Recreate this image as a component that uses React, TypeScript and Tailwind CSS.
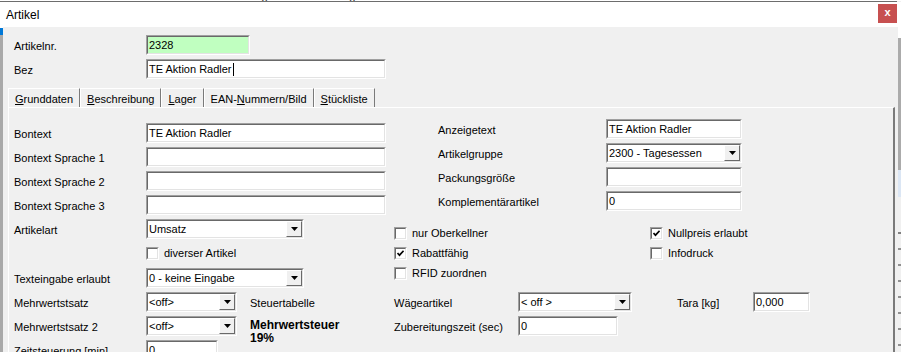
import type { ReactNode } from "react";

const sunkenOuter = "border border-t-[#a0a0a0] border-l-[#a0a0a0] border-b-white border-r-white";
const sunkenInner = "border border-t-[#696969] border-l-[#696969] border-b-[#e3e3e3] border-r-[#e3e3e3]";

function Field({ value = "", className = "", bg = "bg-white", caret = false }: { value?: string; className?: string; bg?: string; caret?: boolean }) {
  return (
    <div className={`h-[20px] shrink-0 ${sunkenOuter} ${className}`}>
      <div className={`h-full flex items-center pl-px ${sunkenInner} ${bg}`}>
        <span className="whitespace-nowrap leading-none">{value}</span>
        {caret && <span className="ml-px w-px h-[13px] bg-black" />}
      </div>
    </div>
  );
}

function DropButton() {
  return (
    <div className="h-full w-[16px] shrink-0 border border-t-white border-l-white border-b-[#696969] border-r-[#696969] bg-[#f0f0f0] flex items-center justify-center">
      <svg width="7" height="4" viewBox="0 0 7 4">
        <path d="M0 0h7L3.5 4z" fill="#000" />
      </svg>
    </div>
  );
}

function Select({ value, className = "" }: { value: string; className?: string }) {
  return (
    <div className={`h-[20px] shrink-0 ${sunkenOuter} ${className}`}>
      <div className={`h-full flex items-center ${sunkenInner} bg-white`}>
        <span className="flex-1 pl-px whitespace-nowrap leading-none">{value}</span>
        <DropButton />
      </div>
    </div>
  );
}

function Check({ checked = false, label }: { checked?: boolean; label: string }) {
  return (
    <div className="flex items-center">
      <div className={`w-[13px] h-[13px] shrink-0 ${sunkenOuter}`}>
        <div className={`w-full h-full ${sunkenInner} bg-white flex items-center justify-center`}>
          {checked && (
            <svg width="7" height="7" viewBox="0 0 7 7">
              <path d="M0.5 3 L2.5 5.2 L6.6 0.8" stroke="#000" strokeWidth="1.7" fill="none" />
            </svg>
          )}
        </div>
      </div>
      <span className="ml-[5px] whitespace-nowrap">{label}</span>
    </div>
  );
}

function Tab({ children }: { children: ReactNode }) {
  return (
    <div className="h-[19px] flex items-center pt-[3px] px-[6px] border-t border-l border-r border-t-white border-l-white border-r-[#7a7a7a] whitespace-nowrap">
      {children}
    </div>
  );
}

function Row({ label, children, h = "h-[24px]" }: { label: string; children?: ReactNode; h?: string }) {
  return (
    <div className={`flex items-center ${h}`}>
      <span className="w-[132px] shrink-0 pt-[2px] whitespace-nowrap">{label}</span>
      {children}
    </div>
  );
}

function RightRow({ label, children }: { label: string; children?: ReactNode }) {
  return (
    <div className="flex items-center h-[24px] pl-[44px]">
      <span className="w-[168px] shrink-0 pt-[2px] whitespace-nowrap">{label}</span>
      {children}
    </div>
  );
}

export default function App() {
  return (
    <div className="w-[901px] h-[352px] overflow-hidden bg-[#f0f0f0] font-['Liberation_Sans',Arial,sans-serif] text-[11px] text-black flex flex-col">
      {/* app behind the dialog */}
      <div className="h-px shrink-0 overflow-hidden bg-white">
        <div className="-mt-[11px] leading-[12px] text-[12px] text-[#333] whitespace-nowrap pl-[2px] tracking-wide">
          Artikelstamm &nbsp;&nbsp; Kasse &nbsp;&nbsp; Bericht &nbsp;&nbsp; Tabelle &nbsp;&nbsp; Lager &nbsp;&nbsp; Einstellungen &nbsp;&nbsp; Extras &nbsp;&nbsp; Hilfe
        </div>
      </div>
      <div className="h-px shrink-0 bg-[#6d6d6d] mr-[4px]" />

      <div className="flex flex-1 min-h-0">
        <div className="w-[3px] shrink-0 flex flex-col">
          <div className="h-[26px] bg-white" />
          <div className="h-[7px] bg-[#0078d7]" />
          <div className="flex-1 bg-[#a9a9a9]" />
        </div>

        {/* dialog */}
        <div className="w-[895px] shrink-0 flex flex-col">
          <div className="h-[25px] shrink-0 bg-white flex items-start justify-between">
            <span className="pl-[3px] pt-[6px] leading-[14px] text-[12px]">Artikel</span>
            <div className="mt-[2px] mr-px w-[19px] h-[19px] bg-[#c75050] text-white font-bold text-[11px] leading-none flex items-center justify-center pb-[2px]">
              x
            </div>
          </div>

          <div className="flex-1 bg-[#f0f0f0] pt-[8px]">
            <div className="pl-[11px]">
              <Row label="Artikelnr." h="h-[20px]">
                <Field value="2328" className="w-[104px]" bg="bg-[#c0ffc0]" />
              </Row>
              <Row label="Bez" h="h-[20px] mt-[4px]">
                <Field value="TE Aktion Radler" className="w-[240px]" caret />
              </Row>
            </div>

            <div className="mt-[9px] ml-[5px] flex">
              <Tab>
                <span><span className="underline">G</span>runddaten</span>
              </Tab>
              <Tab>
                <span><span className="underline">B</span>eschreibung</span>
              </Tab>
              <Tab>
                <span><span className="underline">L</span>ager</span>
              </Tab>
              <Tab>
                <span>EAN-<span className="underline">N</span>ummern/Bild</span>
              </Tab>
              <Tab>
                <span><span className="underline">S</span>tückliste</span>
              </Tab>
            </div>

            <div className="ml-[5px] mr-[3px] h-[260px] border-t border-l border-t-white border-l-white border-r-2 border-r-[#7a7a7a] flex">
              {/* left column */}
              <div className="w-[385px] shrink-0 pl-[5px] pt-[13px]">
                <Row label="Bontext">
                  <Field value="TE Aktion Radler" className="w-[240px]" />
                </Row>
                <Row label="Bontext Sprache 1">
                  <Field className="w-[240px]" />
                </Row>
                <Row label="Bontext Sprache 2">
                  <Field className="w-[240px]" />
                </Row>
                <Row label="Bontext Sprache 3">
                  <Field className="w-[240px]" />
                </Row>
                <Row label="Artikelart">
                  <Select value="Umsatz" className="w-[158px]" />
                </Row>
                <div className="h-[25px] flex items-center pl-[132px]">
                  <Check label="diverser Artikel" />
                </div>
                <Row label="Texteingabe erlaubt">
                  <Select value="0 - keine Eingabe" className="w-[158px]" />
                </Row>
                <Row label="Mehrwertstsatz">
                  <Select value="<off>" className="w-[91px]" />
                  <span className="ml-[13px] pt-[2px]">Steuertabelle</span>
                </Row>
                <div className="h-[24px] flex items-start">
                  <div className="h-full flex items-center">
                    <span className="w-[132px] shrink-0 pt-[2px]">Mehrwertstsatz 2</span>
                    <Select value="<off>" className="w-[91px]" />
                  </div>
                  <div className="ml-[13px] mt-[5px] font-bold text-[12px] leading-[13px]">
                    <div>Mehrwertsteuer</div>
                    <div>19%</div>
                  </div>
                </div>
                <Row label="Zeitsteuerung [min]">
                  <Field value="0" className="w-[72px]" />
                </Row>
              </div>

              {/* right column */}
              <div className="flex-1 pt-[9px]">
                <RightRow label="Anzeigetext">
                  <Field value="TE Aktion Radler" className="w-[136px]" />
                </RightRow>
                <RightRow label="Artikelgruppe">
                  <Select value="2300 - Tagesessen" className="w-[136px]" />
                </RightRow>
                <RightRow label="Packungsgröße">
                  <Field className="w-[136px]" />
                </RightRow>
                <RightRow label="Komplementärartikel">
                  <Field value="0" className="w-[136px]" />
                </RightRow>

                <div className="mt-[10px] grid grid-cols-[256px_auto] auto-rows-[20px] items-center">
                  <Check label="nur Oberkellner" />
                  <Check checked label="Nullpreis erlaubt" />
                  <Check checked label="Rabattfähig" />
                  <Check label="Infodruck" />
                  <Check label="RFID zuordnen" />
                </div>

                <div className="mt-[7px] h-[24px] flex items-center">
                  <span className="w-[124px] shrink-0 pt-[2px]">Wägeartikel</span>
                  <Select value="< off >" className="w-[114px]" />
                  <span className="ml-[45px] w-[76px] shrink-0 pt-[2px]">Tara [kg]</span>
                  <Field value="0,000" className="w-[57px]" />
                </div>
                <div className="h-[24px] flex items-center">
                  <span className="w-[124px] shrink-0 pt-[2px] whitespace-nowrap">Zubereitungszeit (sec)</span>
                  <Field value="0" className="w-[100px]" />
                </div>
              </div>
            </div>
          </div>
        </div>

        <div className="w-[3px] shrink-0 flex flex-col">
          <div className="h-[36px] bg-white" />
          <div className="h-[132px] bg-[#ababab]" />
          <div className="h-[27px] bg-[#dbe6f4]" />
          <div className="h-[35px] bg-[#f0f0f0]" />
          <div className="flex-1 flex flex-col gap-[14px] bg-[#f0f0f0]">
            <div className="h-[2px] bg-[#808080]" />
            <div className="h-[2px] bg-[#909090]" />
            <div className="h-[2px] bg-[#909090]" />
            <div className="h-[2px] bg-[#909090]" />
            <div className="h-[2px] bg-[#909090]" />
            <div className="h-[2px] bg-[#909090]" />
            <div className="h-[2px] bg-[#909090]" />
            <div className="h-[2px] bg-[#909090]" />
          </div>
        </div>
      </div>
    </div>
  );
}
